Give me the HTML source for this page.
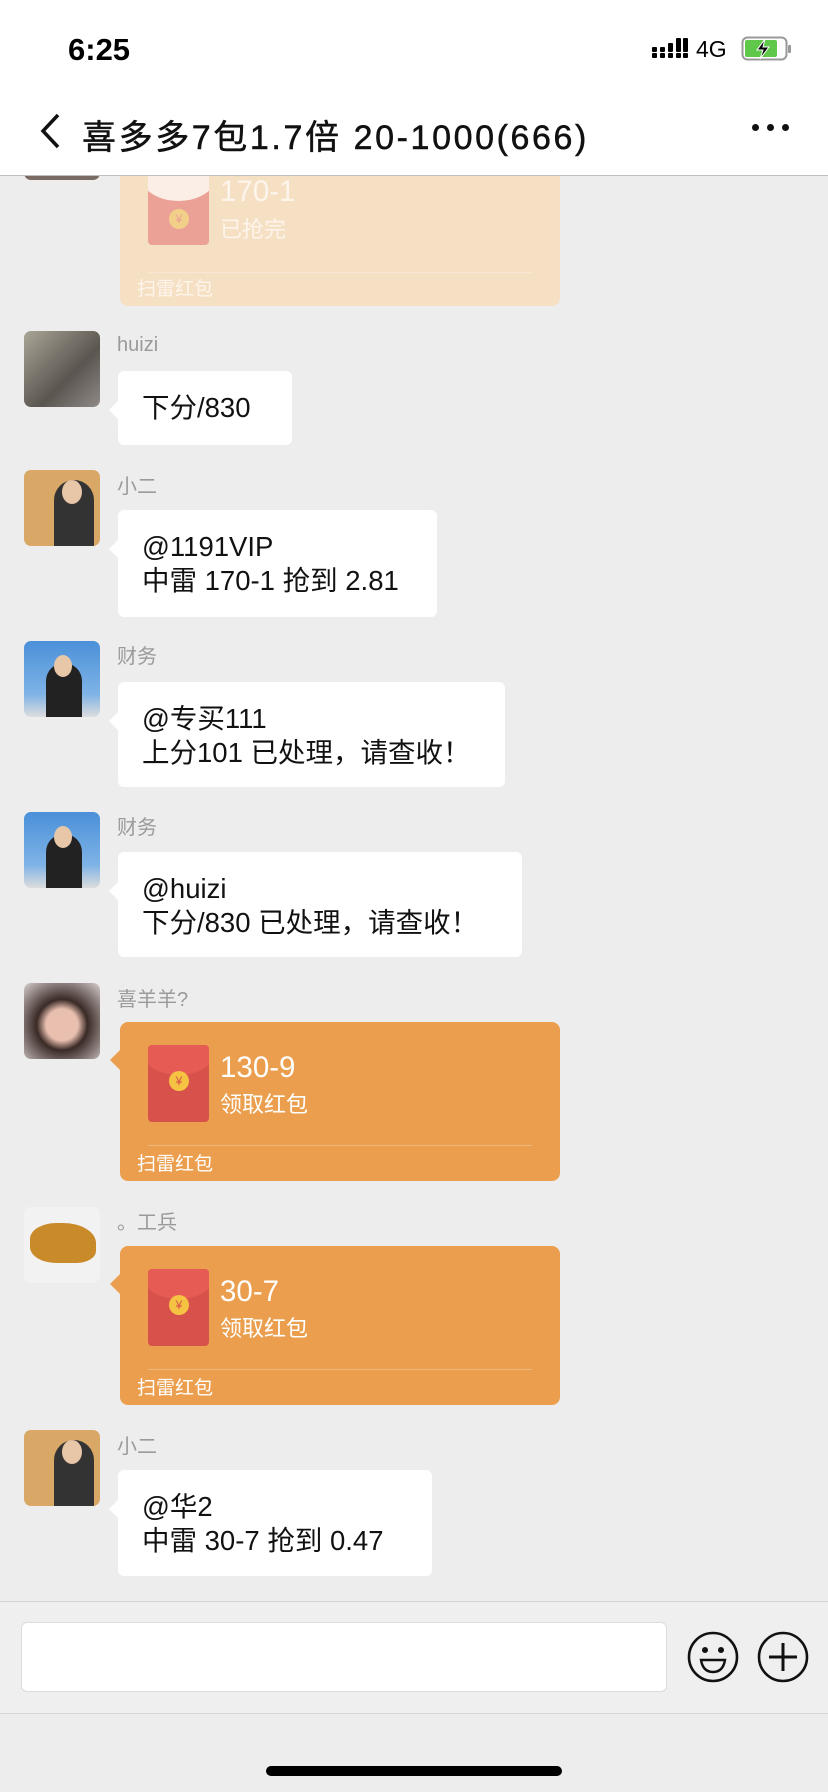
<!DOCTYPE html>
<html><head><meta charset="utf-8"><style>
*{margin:0;padding:0;box-sizing:border-box}
body{width:828px;height:1792px;background:#ededed;position:relative;overflow:hidden;font-family:"Liberation Sans","Noto Sans CJK SC",sans-serif;color:#111}
.a{position:absolute}
.av{position:absolute;left:24px;width:76px;height:76px;border-radius:7px;overflow:hidden}
.nm{position:absolute;left:117px;font-size:20px;color:#9a9a9a;line-height:24px}
.bb{position:absolute;left:118px;background:#fff;border-radius:6px;padding:0 24px;font-size:27.5px;line-height:34px;color:#111;white-space:nowrap}
.bb:before{content:"";position:absolute;left:-9px;top:30px;border:9px solid transparent;border-left:0;border-right-color:#fff}
.rp{position:absolute;left:120px;width:440px;background:#eb9f4e;border-radius:8px}
.rp:before{content:"";position:absolute;left:-10px;top:28px;border:10px solid transparent;border-left:0;border-right-color:#eb9f4e}
.env{position:absolute;left:28px;width:61px;height:77px;border-radius:4px;background:#d8524c;overflow:hidden}
.env .flap{position:absolute;left:-10px;top:-30px;width:81px;height:60px;border-radius:0 0 50% 50%;background:#e65c55}
.env .coin{position:absolute;left:21px;top:26px;width:20px;height:20px;border-radius:50%;background:#f5c242;color:#d8524c;font-size:12px;text-align:center;line-height:20px}
.amt{position:absolute;left:100px;font-size:29.5px;color:#fff;line-height:32px}
.sub{position:absolute;left:100px;font-size:22px;color:#fff;line-height:26px}
.div{position:absolute;left:28px;right:28px;height:1px;background:rgba(255,255,255,.25)}
.ft{position:absolute;left:17px;font-size:19px;color:#fff;line-height:22px}
</style></head><body>

<div class="a" style="left:0;top:0;width:828px;height:176px;background:#fff;border-bottom:1px solid #bdbdbd;z-index:5">
 <div class="a" style="left:68px;top:32px;font-size:31px;font-weight:bold;color:#000">6:25</div>
 <svg class="a" style="left:652px;top:37px" width="36" height="22" viewBox="0 0 36 22">
  <g fill="#000"><rect x="0" y="10" width="5" height="5" rx="1"/><rect x="0" y="16" width="5" height="5" rx="1"/>
  <rect x="8" y="10" width="5" height="5" rx="1"/><rect x="8" y="16" width="5" height="5" rx="1"/>
  <rect x="16" y="6" width="5" height="9" rx="1"/><rect x="16" y="16" width="5" height="5" rx="1"/>
  <rect x="24" y="1" width="5" height="14" rx="1"/><rect x="24" y="16" width="5" height="5" rx="1"/>
  <rect x="31" y="1" width="5" height="14" rx="1"/><rect x="31" y="16" width="5" height="5" rx="1"/></g></svg>
 <div class="a" style="left:696px;top:36px;font-size:23px;color:#000">4G</div>
 <svg class="a" style="left:741px;top:36px" width="52" height="26" viewBox="0 0 52 26">
  <rect x="1.5" y="1.5" width="44" height="22" rx="5" fill="none" stroke="#999" stroke-width="2"/>
  <rect x="4" y="4" width="32" height="17" rx="2" fill="#5fc84a"/>
  <rect x="47" y="9" width="3" height="8" rx="1" fill="#999"/>
  <path d="M24 3 L16 14 L22 14 L19 23 L28 11 L22 11 Z" fill="#000" stroke="#fff" stroke-width="1"/></svg>
 <svg class="a" style="left:38px;top:112px" width="24" height="38" viewBox="0 0 24 38"><path d="M20 3 L5 19 L20 35" fill="none" stroke="#111" stroke-width="3.5"/></svg>
 <div class="a" style="left:82px;top:110px;font-size:34px;color:#111;white-space:nowrap;letter-spacing:2.6px;-webkit-text-stroke:0.5px #111">喜多多7包1.7倍 20-1000(666)</div>
 <div class="a" style="left:752px;top:118px;width:40px;height:20px">
  <span class="a" style="left:0;top:6px;width:7px;height:7px;border-radius:50%;background:#111"></span>
  <span class="a" style="left:15px;top:6px;width:7px;height:7px;border-radius:50%;background:#111"></span>
  <span class="a" style="left:30px;top:6px;width:7px;height:7px;border-radius:50%;background:#111"></span></div>
</div>

<div class="av" style="top:104px;background:#7a6a64"></div>
<div class="rp" style="top:120px;height:186px;background:#f6e0c4">
 <div class="env" style="top:51px;background:#eba196;height:74px"><div class="flap" style="background:#fbeee6"></div><div class="coin" style="top:38px;background:#f3d08a;color:#eba196">¥</div></div>
 <div class="amt" style="top:56px;color:#fdf5ec">170-1</div>
 <div class="sub" style="top:97px;color:#fdf5ec">已抢完</div>
 <div class="div" style="top:152px"></div>
 <div class="ft" style="top:159px;color:#fdf5ec">扫雷红包</div>
</div>
<div class="a" style="left:0;top:0;width:828px;height:176px;background:#fff;z-index:4"></div>

<div class="av" style="top:331px;background:linear-gradient(135deg,#a9a596,#5b5550 60%,#8f8a86)"></div>
<div class="nm" style="top:333px">huizi</div>
<div class="bb" style="top:371px;height:74px;padding-top:20px;width:174px">下分/830</div>

<div class="av" style="top:470px;background:#d9a867"><div class="a" style="left:30px;top:10px;width:40px;height:66px;background:#333;border-radius:20px 20px 0 0"></div><div class="a" style="left:38px;top:10px;width:20px;height:24px;background:#e8c6a8;border-radius:50%"></div></div>
<div class="nm" style="top:475px">小二</div>
<div class="bb" style="top:510px;height:107px;padding-top:20px;width:319px">@1191VIP<br>中雷 170-1 抢到 2.81</div>

<div class="av" style="top:641px;background:linear-gradient(#4a90d9,#7fb3e6 70%,#ddd)"><div class="a" style="left:22px;top:22px;width:36px;height:54px;background:#222;border-radius:18px 18px 0 0"></div><div class="a" style="left:30px;top:14px;width:18px;height:22px;background:#e8c6a8;border-radius:50%"></div></div>
<div class="nm" style="top:645px">财务</div>
<div class="bb" style="top:682px;height:105px;padding-top:20px;width:387px">@专买111<br>上分101 已处理，请查收！</div>

<div class="av" style="top:812px;background:linear-gradient(#4a90d9,#7fb3e6 70%,#ddd)"><div class="a" style="left:22px;top:22px;width:36px;height:54px;background:#222;border-radius:18px 18px 0 0"></div><div class="a" style="left:30px;top:14px;width:18px;height:22px;background:#e8c6a8;border-radius:50%"></div></div>
<div class="nm" style="top:816px">财务</div>
<div class="bb" style="top:852px;height:105px;padding-top:20px;width:404px">@huizi<br>下分/830 已处理，请查收！</div>

<div class="av" style="top:983px;background:radial-gradient(circle at 50% 55%,#e9bfb0 28%,#3a2a26 45%,#d8d0cf)"></div>
<div class="nm" style="top:988px">喜羊羊?</div>
<div class="rp" style="top:1022px;height:159px">
 <div class="env" style="top:23px"><div class="flap"></div><div class="coin">¥</div></div>
 <div class="amt" style="top:30px">130-9</div>
 <div class="sub" style="top:70px">领取红包</div>
 <div class="div" style="top:123px"></div>
 <div class="ft" style="top:132px">扫雷红包</div>
</div>

<div class="av" style="top:1207px;background:#f2f2f2"><div class="a" style="left:6px;top:16px;width:66px;height:40px;background:#c98a2a;border-radius:40% 50% 30% 40%"></div></div>
<div class="nm" style="top:1211px">。工兵</div>
<div class="rp" style="top:1246px;height:159px">
 <div class="env" style="top:23px"><div class="flap"></div><div class="coin">¥</div></div>
 <div class="amt" style="top:30px">30-7</div>
 <div class="sub" style="top:70px">领取红包</div>
 <div class="div" style="top:123px"></div>
 <div class="ft" style="top:132px">扫雷红包</div>
</div>

<div class="av" style="top:1430px;background:#d9a867"><div class="a" style="left:30px;top:10px;width:40px;height:66px;background:#333;border-radius:20px 20px 0 0"></div><div class="a" style="left:38px;top:10px;width:20px;height:24px;background:#e8c6a8;border-radius:50%"></div></div>
<div class="nm" style="top:1435px">小二</div>
<div class="bb" style="top:1470px;height:106px;padding-top:20px;width:314px">@华2<br>中雷 30-7 抢到 0.47</div>

<div class="a" style="left:0;top:1601px;width:828px;height:113px;background:#efefef;border-top:1px solid #d5d5d5;border-bottom:1px solid #d5d5d5"></div>
<div class="a" style="left:21px;top:1622px;width:646px;height:70px;background:#fff;border-radius:6px;border:1px solid #dcdcdc"></div>
<svg class="a" style="left:686px;top:1630px" width="54" height="54" viewBox="0 0 54 54"><circle cx="27" cy="27" r="24" fill="none" stroke="#111" stroke-width="2.6"/><circle cx="19" cy="20" r="3" fill="#111"/><circle cx="35" cy="20" r="3" fill="#111"/><path d="M15 30 H39 Q37 42 27 42 Q17 42 15 30 Z" fill="none" stroke="#111" stroke-width="2.4"/></svg>
<svg class="a" style="left:756px;top:1630px" width="54" height="54" viewBox="0 0 54 54"><circle cx="27" cy="27" r="24" fill="none" stroke="#111" stroke-width="2.6"/><path d="M27 13 V41 M13 27 H41" stroke="#111" stroke-width="3"/></svg>
<div class="a" style="left:266px;top:1766px;width:296px;height:10px;border-radius:5px;background:#000"></div>
</body></html>
